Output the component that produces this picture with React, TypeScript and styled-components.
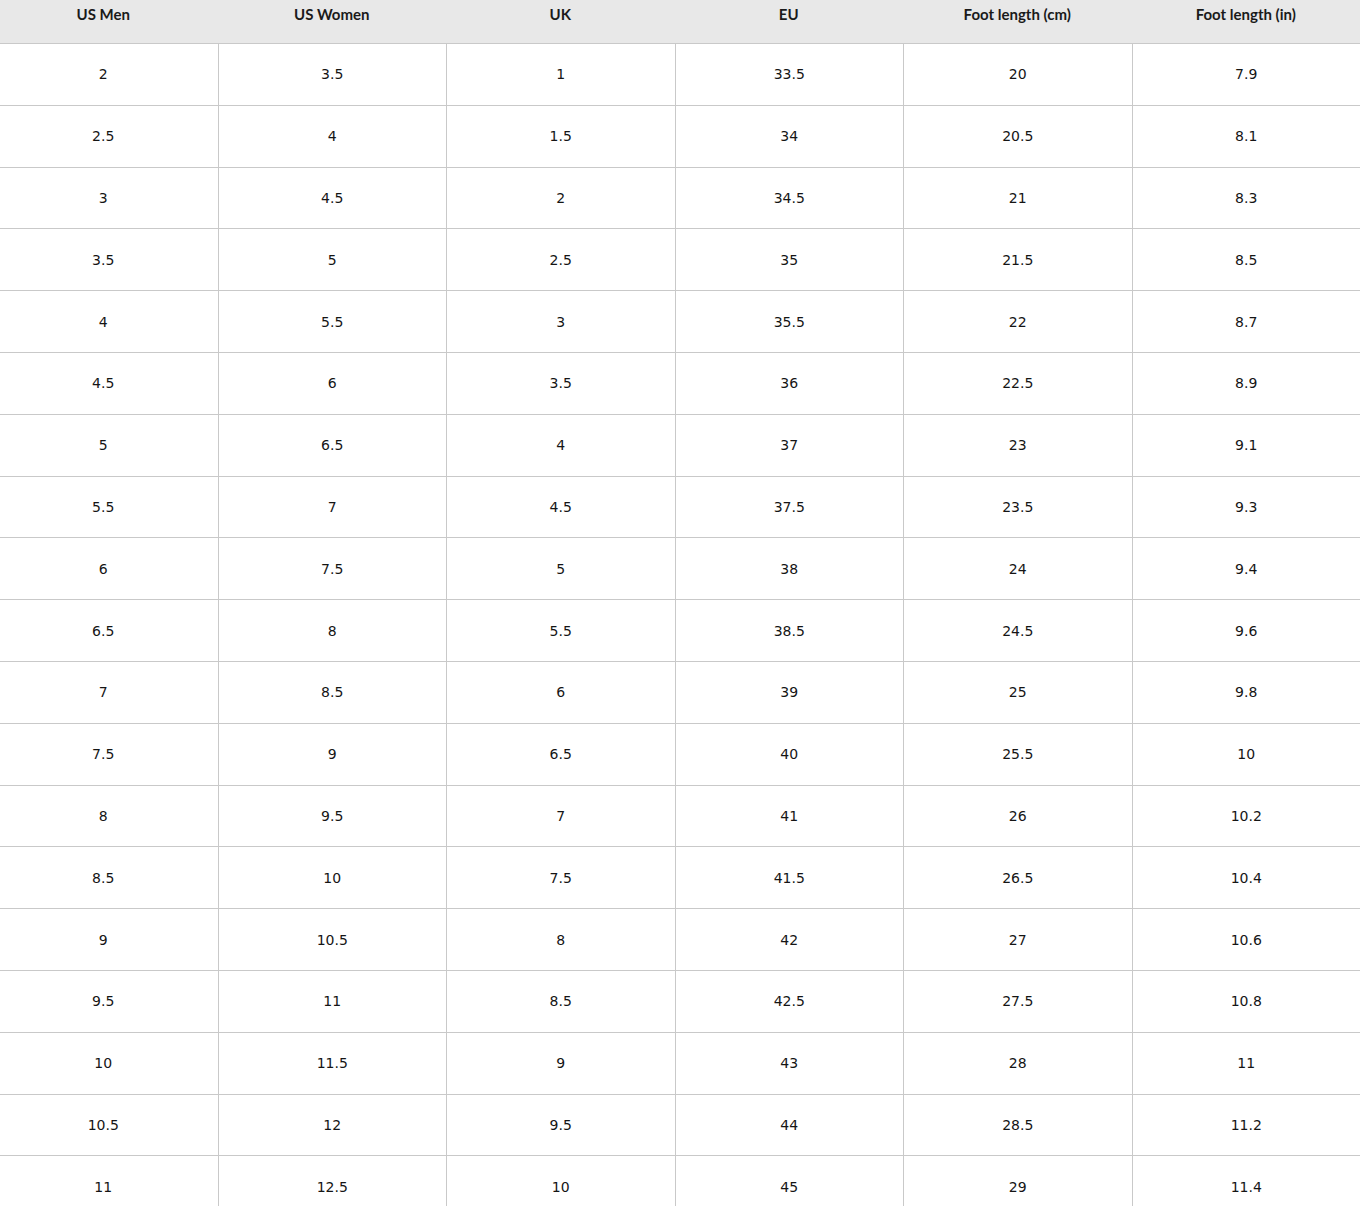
import React from "react";
import styled, { createGlobalStyle } from "styled-components";

const Global = createGlobalStyle`
  html, body { margin: 0; padding: 0; background: #fff; overflow: hidden; }
  body { width: 1360px; }
`;

const Table = styled.div`
  width: 1371px;
  margin-left: -11px;
  color: #222;
`;

const HeaderRow = styled.div`
  display: grid;
  grid-template-columns: repeat(6, 1fr);
  height: 44px;
  background: #e8e8e8;
  border-bottom: 1px solid #c9c9c9;
  box-sizing: border-box;
`;

const HeadCell = styled.div`
  font-family: Lato, "Liberation Sans", sans-serif;
  font-weight: 700;
  font-size: 15px;
  line-height: 18px;
  text-align: center;
  padding-top: 5px;
  color: #1a1a1a;
`;

const Row = styled.div`
  display: grid;
  grid-template-columns: repeat(6, 1fr);
  height: 61.8px;
  border-bottom: 1px solid #c9c9c9;
  box-sizing: border-box;
`;

const Cell = styled.div<{ $first?: boolean }>`
  display: flex;
  align-items: center;
  justify-content: center;
  font-family: "DejaVu Sans", Verdana, sans-serif;
  font-size: 14px;
  color: #151515;
  border-left: ${(p) => (p.$first ? "none" : "1px solid #c9c9c9")};
`;

const headers = ["US Men", "US Women", "UK", "EU", "Foot length (cm)", "Foot length (in)"];

const rows: string[][] = [
  ["2", "3.5", "1", "33.5", "20", "7.9"],
  ["2.5", "4", "1.5", "34", "20.5", "8.1"],
  ["3", "4.5", "2", "34.5", "21", "8.3"],
  ["3.5", "5", "2.5", "35", "21.5", "8.5"],
  ["4", "5.5", "3", "35.5", "22", "8.7"],
  ["4.5", "6", "3.5", "36", "22.5", "8.9"],
  ["5", "6.5", "4", "37", "23", "9.1"],
  ["5.5", "7", "4.5", "37.5", "23.5", "9.3"],
  ["6", "7.5", "5", "38", "24", "9.4"],
  ["6.5", "8", "5.5", "38.5", "24.5", "9.6"],
  ["7", "8.5", "6", "39", "25", "9.8"],
  ["7.5", "9", "6.5", "40", "25.5", "10"],
  ["8", "9.5", "7", "41", "26", "10.2"],
  ["8.5", "10", "7.5", "41.5", "26.5", "10.4"],
  ["9", "10.5", "8", "42", "27", "10.6"],
  ["9.5", "11", "8.5", "42.5", "27.5", "10.8"],
  ["10", "11.5", "9", "43", "28", "11"],
  ["10.5", "12", "9.5", "44", "28.5", "11.2"],
  ["11", "12.5", "10", "45", "29", "11.4"],
];

export default function App() {
  return (
    <>
      <Global />
      <Table>
        <HeaderRow>
          {headers.map((h) => (
            <HeadCell key={h}>{h}</HeadCell>
          ))}
        </HeaderRow>
        {rows.map((r, i) => (
          <Row key={i}>
            {r.map((v, j) => (
              <Cell key={j} $first={j === 0}>
                {v}
              </Cell>
            ))}
          </Row>
        ))}
      </Table>
    </>
  );
}
